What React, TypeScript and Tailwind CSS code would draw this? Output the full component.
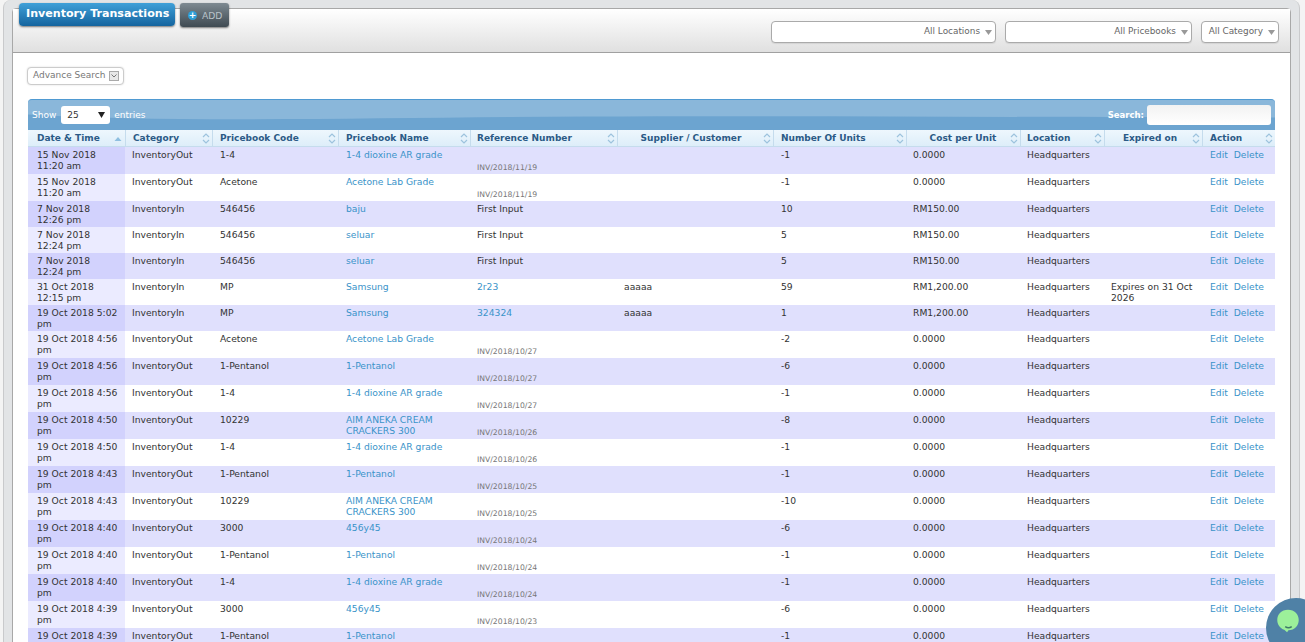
type Row = {
  date: string;
  cat: string;
  code: string;
  name: string;
  ref?: string;
  inv?: string;
  supplier?: string;
  units: string;
  cost: string;
  expires?: string;
  h: string;
};

const rows: Row[] = [
  { date: "15 Nov 2018 11:20 am", cat: "InventoryOut", code: "1-4", name: "1-4 dioxine AR grade", inv: "INV/2018/11/19", units: "-1", cost: "0.0000", h: "h-[27px]" },
  { date: "15 Nov 2018 11:20 am", cat: "InventoryOut", code: "Acetone", name: "Acetone Lab Grade", inv: "INV/2018/11/19", units: "-1", cost: "0.0000", h: "h-[27px]" },
  { date: "7 Nov 2018 12:26 pm", cat: "InventoryIn", code: "546456", name: "baju", ref: "First Input", units: "10", cost: "RM150.00", h: "h-[26px]" },
  { date: "7 Nov 2018 12:24 pm", cat: "InventoryIn", code: "546456", name: "seluar", ref: "First Input", units: "5", cost: "RM150.00", h: "h-[26px]" },
  { date: "7 Nov 2018 12:24 pm", cat: "InventoryIn", code: "546456", name: "seluar", ref: "First Input", units: "5", cost: "RM150.00", h: "h-[26px]" },
  { date: "31 Oct 2018 12:15 pm", cat: "InventoryIn", code: "MP", name: "Samsung", ref: "2r23", supplier: "aaaaa", units: "59", cost: "RM1,200.00", expires: "Expires on 31 Oct 2026", h: "h-[26px]" },
  { date: "19 Oct 2018 5:02 pm", cat: "InventoryIn", code: "MP", name: "Samsung", ref: "324324", supplier: "aaaaa", units: "1", cost: "RM1,200.00", h: "h-[26px]" },
  { date: "19 Oct 2018 4:56 pm", cat: "InventoryOut", code: "Acetone", name: "Acetone Lab Grade", inv: "INV/2018/10/27", units: "-2", cost: "0.0000", h: "h-[27px]" },
  { date: "19 Oct 2018 4:56 pm", cat: "InventoryOut", code: "1-Pentanol", name: "1-Pentanol", inv: "INV/2018/10/27", units: "-6", cost: "0.0000", h: "h-[27px]" },
  { date: "19 Oct 2018 4:56 pm", cat: "InventoryOut", code: "1-4", name: "1-4 dioxine AR grade", inv: "INV/2018/10/27", units: "-1", cost: "0.0000", h: "h-[27px]" },
  { date: "19 Oct 2018 4:50 pm", cat: "InventoryOut", code: "10229", name: "AIM ANEKA CREAM CRACKERS 300", inv: "INV/2018/10/26", units: "-8", cost: "0.0000", h: "h-[27px]" },
  { date: "19 Oct 2018 4:50 pm", cat: "InventoryOut", code: "1-4", name: "1-4 dioxine AR grade", inv: "INV/2018/10/26", units: "-1", cost: "0.0000", h: "h-[27px]" },
  { date: "19 Oct 2018 4:43 pm", cat: "InventoryOut", code: "1-Pentanol", name: "1-Pentanol", inv: "INV/2018/10/25", units: "-1", cost: "0.0000", h: "h-[27px]" },
  { date: "19 Oct 2018 4:43 pm", cat: "InventoryOut", code: "10229", name: "AIM ANEKA CREAM CRACKERS 300", inv: "INV/2018/10/25", units: "-10", cost: "0.0000", h: "h-[27px]" },
  { date: "19 Oct 2018 4:40 pm", cat: "InventoryOut", code: "3000", name: "456y45", inv: "INV/2018/10/24", units: "-6", cost: "0.0000", h: "h-[27px]" },
  { date: "19 Oct 2018 4:40 pm", cat: "InventoryOut", code: "1-Pentanol", name: "1-Pentanol", inv: "INV/2018/10/24", units: "-1", cost: "0.0000", h: "h-[27px]" },
  { date: "19 Oct 2018 4:40 pm", cat: "InventoryOut", code: "1-4", name: "1-4 dioxine AR grade", inv: "INV/2018/10/24", units: "-1", cost: "0.0000", h: "h-[27px]" },
  { date: "19 Oct 2018 4:39 pm", cat: "InventoryOut", code: "3000", name: "456y45", inv: "INV/2018/10/23", units: "-6", cost: "0.0000", h: "h-[27px]" },
  { date: "19 Oct 2018 4:39 pm", cat: "InventoryOut", code: "1-Pentanol", name: "1-Pentanol", inv: "INV/2018/10/23", units: "-1", cost: "0.0000", h: "h-[27px]" },
];

const columns = [
  { label: "Date & Time", w: "w-[97px]", align: "text-left pl-[9px]", active: true },
  { label: "Category", w: "w-[87px]", align: "text-left pl-[7px] border-l" },
  { label: "Pricebook Code", w: "w-[126px]", align: "text-left pl-[7px] border-l" },
  { label: "Pricebook Name", w: "w-[132px]", align: "text-left pl-[7px] border-l" },
  { label: "Reference Number", w: "w-[147px]", align: "text-left pl-[6px] border-l" },
  { label: "Supplier / Customer", w: "w-[156px]", align: "text-center pl-[1px] border-l" },
  { label: "Number Of Units", w: "w-[133px]", align: "text-left pl-[7px] border-l" },
  { label: "Cost per Unit", w: "w-[114px]", align: "text-center pl-[9px] border-l" },
  { label: "Location", w: "w-[84px]", align: "text-left pl-[6px] border-l" },
  { label: "Expired on", w: "w-[98px]", align: "text-center pl-[3px] border-l" },
  { label: "Action", w: "w-[73px]", align: "text-left pl-[7px] border-l" },
];

function SortIcon({ active }: { active?: boolean }) {
  if (active) {
    return (
      <svg className="absolute top-[6px] right-[3px]" width="8" height="6" viewBox="0 0 8 6">
        <path d="M4 1 L7.500 5 H0.500 Z" fill="#8fbfe0" />
      </svg>
    );
  }
  return (
    <svg className="absolute top-[3px] right-[2px]" width="8" height="11" viewBox="0 0 8 11" fill="none" stroke="#9dc3dd" strokeWidth="1.2">
      <path d="M1 4 L4 1 L7 4" />
      <path d="M1 7 L4 10 L7 7" />
    </svg>
  );
}

function FilterSelect({ label, w }: { label: string; w: string }) {
  return (
    <div className={`${w} flex h-[22px] items-center justify-end rounded-[4px] border border-[#aaaaaa] bg-white pr-[3px] text-[8.900px] whitespace-nowrap text-[#666666] shadow-[0_1px_1px_rgba(0,0,0,0.08)]`}>
      <span className="pb-[1px]">{label}</span>
      <svg className="ml-[5px]" width="7" height="5" viewBox="0 0 7 5">
        <path d="M0 0 H7 L3.500 5 Z" fill="#999999" />
      </svg>
    </div>
  );
}

function ChatBubble() {
  return (
    <div className="absolute top-[598px] left-[1266px] flex h-[60px] w-[60px] items-center justify-center rounded-full bg-[#4f81a6]">
      <svg className="mt-[-15px] ml-[-16px]" width="28" height="28" viewBox="0 0 30 30">
        <path d="M15 3 C8 3 3.500 8 3.500 14 C3.500 19 6.500 23 11 24.500 L14 27 L15.500 25 C22 25 26.500 20 26.500 14 C26.500 8 22 3 15 3 Z" fill="#9cf09a" />
        <path d="M12 21 C14 22.500 17 22.500 19 21" fill="none" stroke="#3f7a6a" strokeWidth="1.600" />
      </svg>
    </div>
  );
}

export default function App() {
  return (
    <div className="relative h-[642px] w-[1305px] overflow-hidden bg-[#f4f4f4] pl-[3px] font-['DejaVu_Sans','Liberation_Sans',sans-serif] text-[9.200px] leading-[11px] text-[#333333]">
      <div className="absolute top-[3px] left-[19px] z-10 flex items-start gap-[5px]">
        <div className="h-[23px] w-[156px] rounded-[4px] bg-gradient-to-b from-[#3fa0d8] to-[#14659f] pt-[3px] pl-[7px] text-[11.100px] leading-[15px] font-bold whitespace-nowrap text-white shadow-[0_1px_2px_rgba(0,0,0,0.5)]">
          Inventory Transactions
        </div>
        <div className="flex h-[24px] w-[49px] items-center rounded-[3px] bg-gradient-to-b from-[#7e8a92] to-[#3f4a52] pl-[8px] text-[#b9c3ca] shadow-[0_1px_2px_rgba(0,0,0,0.5)]">
          <span className="flex h-[9px] w-[9px] items-center justify-center rounded-full bg-[#2f9fd8] text-[9px] leading-none font-bold text-white">+</span>
          <span className="ml-[5px]">ADD</span>
        </div>
      </div>

      <div className="h-[660px] w-[1297px] rounded-t-[8px] border-x border-[#c9cacc] bg-[#e2e4e6] pt-[8px] pl-[8px]">
        <div className="h-[700px] w-[1279px] rounded-t-[4px] border border-[#a8a8a8] bg-white">
          <div className="flex h-[44px] items-start justify-end gap-[9px] border-b border-[#a0a0a0] bg-gradient-to-b from-white to-[#e0e0e0] pt-[12px] pr-[11px]">
            <FilterSelect label="All Locations" w="w-[225px]" />
            <FilterSelect label="All Pricebooks" w="w-[187px]" />
            <FilterSelect label="All Category" w="w-[78px]" />
          </div>

          <div className="px-[14px] pt-[14px]">
            <div className="flex h-[18px] w-[97px] items-center rounded-[4px] border border-[#cccccc] bg-white pb-[1px] pl-[5px] text-[9px] whitespace-nowrap text-[#777777] shadow-[0_0_2px_rgba(0,0,0,0.15)]">
              Advance Search
              <span className="ml-[3px] flex h-[10px] w-[10px] items-center justify-center border border-[#aaaaaa] bg-[#e8e8e8]">
                <svg width="6" height="4" viewBox="0 0 6 4"><path d="M0.500 0.500 L3 3 L5.500 0.500" fill="none" stroke="#777777" /></svg>
              </span>
            </div>

            <div className="mt-[14px] ml-[1px] w-[1247px]">
              <div className="relative flex h-[31px] items-center overflow-hidden rounded-t-[4px] border-t border-[#4f9ad2] bg-[#6ca4d0] px-[4px] text-[9px] text-white">
                <svg className="absolute inset-0 h-full w-full" viewBox="0 0 1247 31" preserveAspectRatio="none">
                  <path d="M0 0 H1247 V18 C1000 18 800 16 560 17 C350 18 150 24 0 15 Z" fill="#8ab7da" />
                </svg>
                <span className="relative">Show</span>
                <div className="relative ml-[5px] flex h-[18px] w-[49px] items-center justify-between rounded-[3px] bg-white pr-[5px] pl-[6px] text-[#333333]">
                  25
                  <svg width="7" height="6" viewBox="0 0 7 6"><path d="M0 0 H7 L3.500 6 Z" fill="#222222" /></svg>
                </div>
                <span className="relative ml-[4px]">entries</span>
                <span className="relative ml-auto text-[8.500px] font-bold">Search:</span>
                <div className="relative ml-[3px] h-[20px] w-[124px] rounded-[3px] bg-gradient-to-b from-[#f2f2f2] to-white" />
              </div>

              <table className="w-full table-fixed border-separate border-spacing-0">
                <thead>
                  <tr className="h-[17px] bg-gradient-to-b from-[#eef7fd] to-[#dcedf9]">
                    {columns.map((c) => (
                      <th key={c.label} className={`${c.w} ${c.align} relative border-b border-[#c5dced] pt-[1px] pr-[10px] align-middle text-[9px] font-bold whitespace-nowrap text-[#2b5a86]`}>
                        {c.label}
                        <SortIcon active={c.active} />
                      </th>
                    ))}
                  </tr>
                </thead>
                <tbody>
                  {rows.map((r, i) => {
                    const odd = i % 2 === 0;
                    return (
                      <tr key={i} className={`${r.h} ${odd ? "bg-[#e0e0fd]" : "bg-white"}`}>
                        <td className={`${odd ? "bg-[#d2d2fd]" : "bg-[#ebebff]"} pt-[2px] pr-[7px] pl-[9px] align-top`}>{r.date}</td>
                        <td className="pt-[2px] pl-[7px] align-top">{r.cat}</td>
                        <td className="pt-[2px] pl-[8px] align-top">{r.code}</td>
                        <td className="pt-[2px] pr-[6px] pl-[8px] align-top text-[#3a93c9]">{r.name}</td>
                        <td className="relative pt-[2px] pl-[7px] align-top">
                          {r.ref && (
                            <span className={r.ref === "First Input" ? "" : "text-[#3a93c9]"}>{r.ref}</span>
                          )}
                          {r.inv && (
                            <span className="absolute top-[15px] left-[7px] text-[7.700px] text-[#777777]">{r.inv}</span>
                          )}
                        </td>
                        <td className="pt-[2px] pl-[7px] align-top">{r.supplier}</td>
                        <td className="pt-[2px] pl-[8px] align-top">{r.units}</td>
                        <td className="pt-[2px] pl-[7px] align-top">{r.cost}</td>
                        <td className="pt-[2px] pl-[7px] align-top">Headquarters</td>
                        <td className="pt-[2px] pr-[4px] pl-[7px] align-top">{r.expires}</td>
                        <td className="pt-[2px] pl-[8px] align-top whitespace-nowrap text-[#3a93c9]">
                          Edit<span className="ml-[6px]">Delete</span>
                        </td>
                      </tr>
                    );
                  })}
                </tbody>
              </table>
            </div>
          </div>
        </div>
      </div>
      <ChatBubble />
    </div>
  );
}
